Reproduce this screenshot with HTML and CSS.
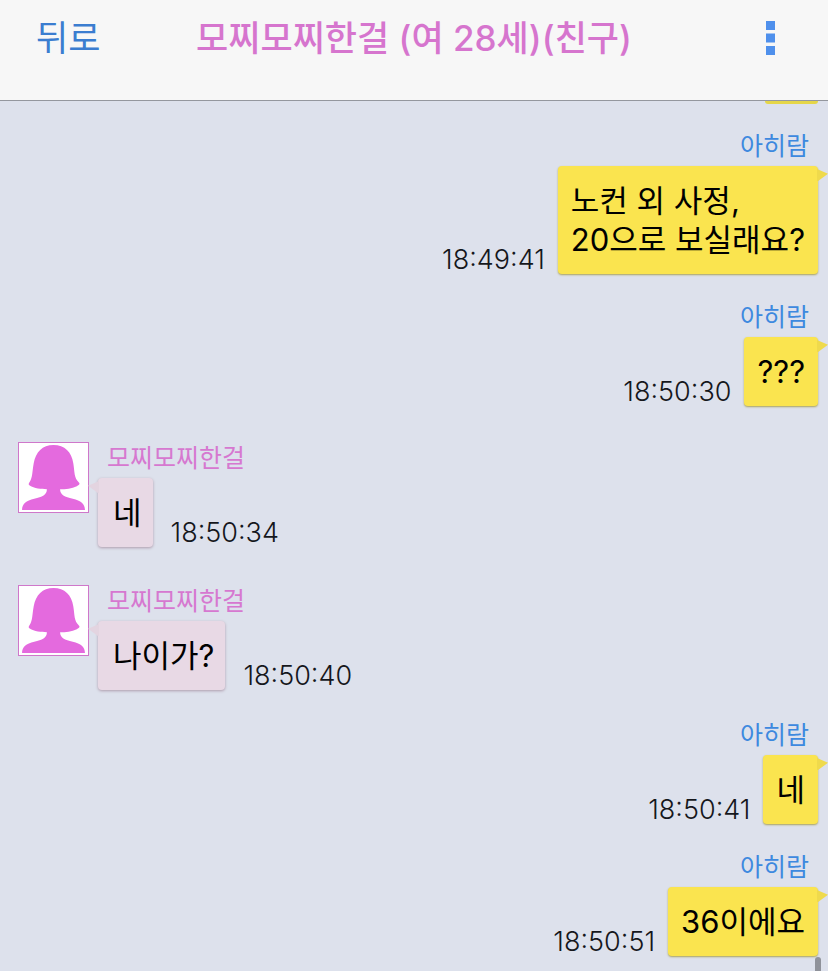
FILE: index.html
```html
<!DOCTYPE html>
<html lang="ko">
<head>
    <meta charset="UTF-8">
    <meta name="viewport" content="width=device-width, initial-scale=1.0">
    <title>모찌모찌한걸</title>
    <link rel="stylesheet" href="styles.css">
</head>
<body>
    <header>
        <button class="back-button" type="button">뒤로</button>
        <h1>모찌모찌한걸 (여 28세)(친구)</h1>
        <button class="menu-button" type="button" aria-label="메뉴">
            <svg width="9" height="34" viewBox="0 0 9 34"><path d="M0 0h9v9H0zM0 12.500h9v9H0zM0 25h9v9H0z"/></svg>
        </button>
    </header>

    <!-- Shared avatar drawing -->
    <svg class="symbols" aria-hidden="true">
        <symbol id="woman" viewBox="0 0 68 68">
            <path d="M34 2C45 2 52 9 53.500 20C55 29 54 34 59 39C60.500 40.500 59 41.500 57 42.500C52 45 46 45.500 40.500 45.500C40.500 51 45 53 53 55C61 57 65 60 65 66H3C3 60 7 57 15 55C23 53 27.500 51 27.500 45.500C22 45.500 15 45 10.500 42C9 41 9.500 40 10.500 38.500C13.500 34 13 28 14.500 20C16.500 9 23 2 34 2Z"/>
        </symbol>
    </svg>

    <main class="chatbox">
        <div class="bubble-end"></div>

        <div class="message user">
            <div class="name">아히람</div>
            <div class="message-row">
                <time>18:49:41</time>
                <div class="message-content">노컨 외 사정,<br>20으로 보실래요?</div>
            </div>
        </div>

        <div class="message user">
            <div class="name">아히람</div>
            <div class="message-row">
                <time>18:50:30</time>
                <div class="message-content">???</div>
            </div>
        </div>

        <div class="message friend">
            <svg class="avatar"><use href="#woman"/></svg>
            <div class="message-body">
                <div class="name">모찌모찌한걸</div>
                <div class="message-row">
                    <div class="message-content">네</div>
                    <time>18:50:34</time>
                </div>
            </div>
        </div>

        <div class="message friend">
            <svg class="avatar"><use href="#woman"/></svg>
            <div class="message-body">
                <div class="name">모찌모찌한걸</div>
                <div class="message-row">
                    <div class="message-content">나이가?</div>
                    <time>18:50:40</time>
                </div>
            </div>
        </div>

        <div class="message user">
            <div class="name">아히람</div>
            <div class="message-row">
                <time>18:50:41</time>
                <div class="message-content">네</div>
            </div>
        </div>

        <div class="message user">
            <div class="name">아히람</div>
            <div class="message-row">
                <time>18:50:51</time>
                <div class="message-content">36이에요</div>
            </div>
        </div>

        <div class="scroll-thumb"></div>
    </main>
</body>
</html>
```

FILE: styles.css
```css
* {
    box-sizing: border-box;
}
body {
    font-family: Inter, "Noto Sans CJK KR", sans-serif;
    margin: 0;
    background-color: #dde1ec;
    color: #000;
    display: flex;
    flex-direction: column;
    height: 100vh;
    overflow: hidden;
}
header {
    display: grid;
    grid-template-columns: 1fr auto 1fr;
    align-items: center;
    flex-shrink: 0;
    padding: 14px 36px 38px;
    background-color: #f7f7f7;
    border-bottom: 1px solid #94979e;
}
h1 {
    margin: 0;
    font-size: 35px;
    line-height: 48px;
    font-weight: 500;
    color: #d675ce;
    white-space: nowrap;
}
button {
    padding: 0;
    border: none;
    background: none;
    font-family: inherit;
    cursor: pointer;
}
.back-button {
    justify-self: start;
    font-size: 35px;
    line-height: 48px;
    color: #3b7dd0;
}
.menu-button {
    justify-self: end;
    padding: 0 17px;
}
.menu-button svg {
    display: block;
    fill: #4f90ec;
}
.symbols {
    position: absolute;
    width: 0;
    height: 0;
}
.chatbox {
    position: relative;
    flex: 1;
    display: flex;
    flex-direction: column;
    gap: 27px;
    padding: 0 10px 0 18px;
}
/* Bottom edge of the bubble scrolled under the header */
.bubble-end {
    align-self: flex-end;
    flex-shrink: 0;
    width: 53px;
    height: 3px;
    margin-bottom: -1px;
    background-color: #e5d649;
    border-radius: 0 0 4px 4px;
}
.message {
    display: flex;
}
.user {
    flex-direction: column;
    align-items: flex-end;
}
.friend {
    gap: 9px;
    padding: 9px 0 2px;
}
.avatar {
    width: 71px;
    height: 71px;
    background-color: #fff;
    border: 1px solid #cf77ca;
    fill: #e46ade;
}
.name {
    font-size: 25px;
    line-height: 32px;
    margin-bottom: 4px;
    padding: 0 9px;
}
.user .name {
    color: #3d89df;
}
.friend .name {
    color: #d678d0;
}
.message-row {
    display: flex;
    align-items: flex-end;
    gap: 13px;
}
.friend .message-row {
    gap: 18px;
}
.message-content {
    position: relative;
    padding: 15px 13px;
    font-size: 31px;
    line-height: 39px;
    border-radius: 4px;
}
.user .message-content {
    background-color: #fae44f;
    box-shadow: 0 1px 2px #a9a25b;
}
.friend .message-content {
    padding: 15px 11px 15px 15px;
    background-color: #e8d9e5;
    box-shadow: 0 1px 3px #ae9cac;
}
/* Bubble tails */
.message-content::after {
    content: "";
    position: absolute;
    top: 3px;
    width: 11px;
    height: 12px;
}
.user .message-content::after {
    right: -10px;
    background-color: #efda4c;
    clip-path: polygon(0 0, 100% 40%, 10% 100%, 0 100%);
}
.friend .message-content::after {
    left: -10px;
    background-color: #e3d4e0;
    clip-path: polygon(100% 0, 0 40%, 90% 100%, 100% 100%);
}
time {
    font-size: 27px;
    font-weight: 300;
    line-height: 29px;
    color: #15171c;
}
.scroll-thumb {
    position: absolute;
    right: 7px;
    bottom: -6px;
    width: 6px;
    height: 20px;
    border-radius: 3px;
    background-color: #8f929a;
}
```
